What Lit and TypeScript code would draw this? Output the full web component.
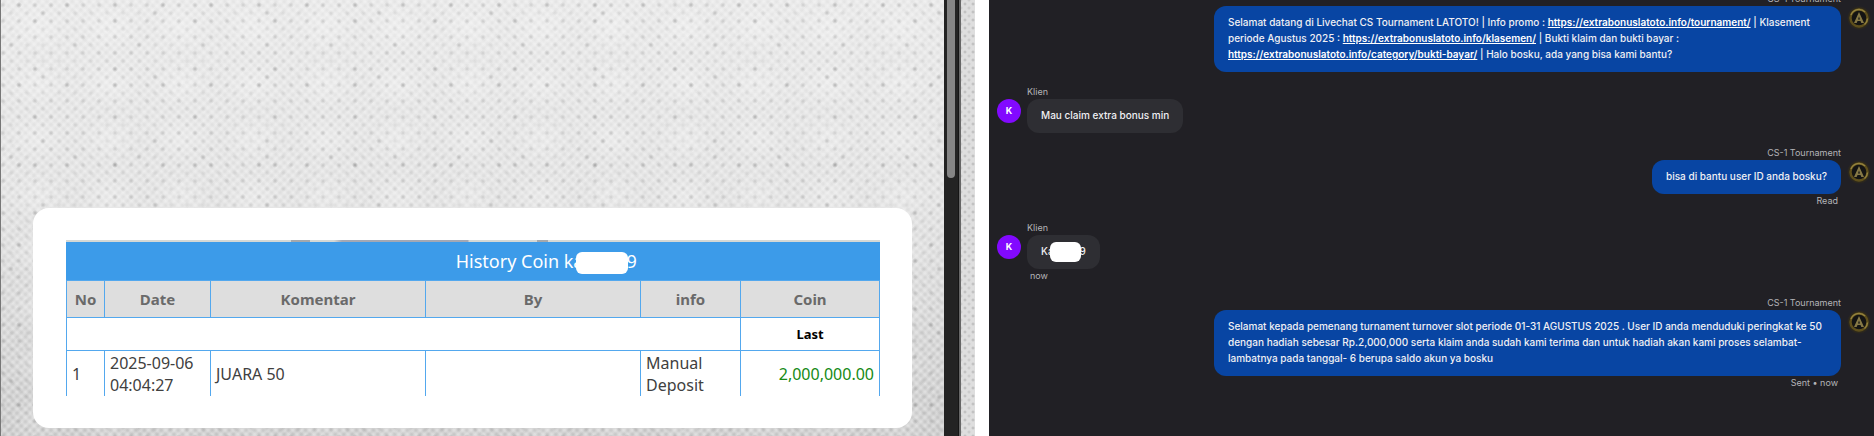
import { LitElement, html, css, nothing, TemplateResult } from "lit";
import { customElement, property } from "lit/decorators.js";

@customElement("cs-avatar")
class CsAvatar extends LitElement {
  static styles = css`
    :host { display: block; width: 24px; height: 24px; }
    svg { display: block; width: 24px; height: 24px; }
  `;
  render() {
    return html`<svg viewBox="0 0 24 24" role="img" aria-label="CS-1 Tournament">
      <defs>
        <radialGradient id="glow">
          <stop offset="0.7" stop-color="#3a3113" />
          <stop offset="1" stop-color="#3a3113" stop-opacity="0" />
        </radialGradient>
      </defs>
      <circle cx="12" cy="12" r="12" fill="url(#glow)" />
      <circle cx="12" cy="12" r="8.5" fill="#141413" stroke="#5e4f1c" stroke-width="2.400" />
      <path d="M4 9A8.500 8.500 0 0 1 18 6M20.500 12.500A8.500 8.500 0 0 1 17.500 18.500" fill="none" stroke="#94833f" stroke-width="1.400" />
      <path d="M12 6 17 17H14.300L13.500 15H10.500L9.700 17H7Z" fill="#857846" />
      <path d="M12 10.500 13 13.500H11Z" fill="#141413" />
    </svg>`;
  }
}

@customElement("history-panel")
class HistoryPanel extends LitElement {
  static styles = css`
    :host {
      display: flex;
      min-width: 0;
      font-family: "Noto Sans", "Open Sans", sans-serif;
    }
    .page {
      flex: 1;
      min-width: 0;
      display: flex;
      flex-direction: column;
      justify-content: flex-end;
      padding: 0 32px 8px;
      border-left: 1px solid #777;
      background:
        radial-gradient(circle, rgba(70, 70, 70, 0.2) 0, transparent 3px) 10px -3px / 16px 16px,
        radial-gradient(circle, rgba(70, 70, 70, 0.12) 0, transparent 3px) 2px 5px / 16px 16px,
        radial-gradient(circle at 18px 5px, rgba(70, 70, 70, 0.16) 0, transparent 3px) 0 0 / 48px 80px,
        radial-gradient(circle at 34px 21px, rgba(70, 70, 70, 0.14) 0, transparent 3px) 0 0 / 80px 48px,
        radial-gradient(circle at 10px 45px, rgba(70, 70, 70, 0.16) 0, transparent 3px) 0 0 / 64px 112px,
        radial-gradient(circle at 42px 13px, rgba(70, 70, 70, 0.16) 0, transparent 3px) 0 0 / 112px 64px,
        radial-gradient(ellipse at 50% 50%, rgba(255, 255, 255, 0.2), transparent 60%) 0 0 / 72px 56px,
        repeating-linear-gradient(45deg, rgba(255, 255, 255, 0.24) 0 1px, transparent 3px 4px, rgba(255, 255, 255, 0.24) 6px),
        repeating-linear-gradient(135deg, rgba(255, 255, 255, 0.24) 0 1px, transparent 3px 4px, rgba(255, 255, 255, 0.24) 6px),
        linear-gradient(#e5e5e5, #dedede 45%, #c4c4c4);
    }
    .track {
      flex: none;
      width: 15px;
      padding: 0 3px;
      box-sizing: border-box;
      background: #232323;
      border-right: 1px solid #151515;
    }
    .thumb {
      height: 178px;
      border-radius: 0 0 5px 5px;
      background: #858585;
    }
    .edge {
      flex: none;
      width: 14px;
      border-left: 2px solid #666;
      background:
        radial-gradient(circle, rgba(80, 80, 80, 0.3) 0, transparent 2px) 0 0 / 8px 8px,
        radial-gradient(circle, rgba(80, 80, 80, 0.2) 0, transparent 2px) 4px 4px / 8px 8px,
        #dedede;
    }
    .card {
      background: #fff;
      border-radius: 16px;
      padding: 32px 32px 32px 33px;
    }
    .strip {
      height: 2px;
      background: linear-gradient(90deg, #d5d8d5 0 225px, #a4a8ac 225px 244px, #d5d8d5 244px 268px, #a4a8b4 276px 402px, #d5d8d5 403px 471px, #a4a8ac 471px 482px, #d5d8d5 482px);
    }
    table {
      width: 100%;
      table-layout: fixed;
      border-collapse: collapse;
      font-size: 16px;
      line-height: 22px;
      color: #404040;
    }
    caption {
      height: 38px;
      padding-left: 18%;
      line-height: 38px;
      font-size: 18px;
      color: #fff;
      background: #3c9be9;
    }
    th, td { border: 1px solid #53a8ee; padding: 0 5px; }
    td { text-align: left; border-bottom: 0; padding-top: 1px; }
    .heads th { height: 36px; background: #dedede; color: #6a6a6a; font-size: 15px; }
    .totals td, .totals th { height: 32px; padding-top: 0; }
    .totals th { font-size: 13px; color: #000; }
    td.coin { text-align: right; color: #158a15; }
    .mask {
      display: inline-block;
      width: 52px;
      height: 22px;
      margin: 0 -2px 0 -7px;
      vertical-align: middle;
      border-radius: 6px;
      background: #fff;
      position: relative;
    }
    .n { width: 38px; }
    .d { width: 106px; }
    .k { width: 215px; }
    .i { width: 100px; }
    .c { width: 139px; }
  `;
  render() {
    return html`
      <div class="page">
        <section class="card">
          <div class="strip"></div>
          <table>
            <caption>History Coin ka<span class="mask"></span>9</caption>
            <colgroup>
              <col class="n"><col class="d"><col class="k"><col class="k"><col class="i"><col class="c">
            </colgroup>
            <thead>
              <tr class="heads">
                ${["No", "Date", "Komentar", "By", "info", "Coin"].map((h) => html`<th scope="col">${h}</th>`)}
              </tr>
            </thead>
            <tbody>
              <tr class="totals"><td colspan="5"></td><th>Last</th></tr>
              <tr>
                <td>1</td><td>2025-09-06 04:04:27</td><td>JUARA 50</td><td></td>
                <td>Manual Deposit</td><td class="coin">2,000,000.00</td>
              </tr>
            </tbody>
          </table>
        </section>
      </div>
      <div class="track"><div class="thumb"></div></div>
      <div class="edge"></div>
    `;
  }
}

@customElement("chat-message")
class ChatMessage extends LitElement {
  @property() author = "";
  @property() status = "";
  @property({ type: Boolean, reflect: true }) own = false;
  @property({ attribute: false }) body: TemplateResult | string = "";

  static styles = css`
    :host { display: flex; gap: 6px; align-items: flex-start; }
    :host([own]) { flex-direction: row-reverse; }
    .stack { display: flex; flex-direction: column; align-items: flex-start; max-width: 627px; }
    :host([own]) .stack { align-items: flex-end; }
    .name, .status { font-size: 9px; line-height: 14px; color: #b4b4b8; }
    .status { padding: 0 3px; }
    .bubble {
      padding: 8px 14px 10px;
      border-radius: 12px;
      background: #2e2e33;
      color: #f0f0f4;
      font-size: 10px;
      font-weight: 500;
      line-height: 16px;
    }
    :host([own]) .bubble { background: #0845a3; }
    a { color: #fff; font-weight: 600; text-decoration: underline; }
    .avatar { flex: none; margin-top: 14px; }
    .initial {
      width: 24px;
      height: 24px;
      border-radius: 50%;
      background: #8209ff;
      color: #fff;
      font-size: 9px;
      font-weight: 700;
      line-height: 24px;
      text-align: center;
    }
    .mask {
      display: inline-block;
      width: 31px;
      height: 20px;
      margin: -4px -1px -4px -4px;
      vertical-align: middle;
      border-radius: 6px;
      background: #fff;
      position: relative;
    }
  `;
  render() {
    return html`
      <div class="avatar">${this.own ? html`<cs-avatar></cs-avatar>` : html`<div class="initial">K</div>`}</div>
      <div class="stack">
        <div class="name">${this.author}</div>
        <div class="bubble">${this.body}</div>
        ${this.status ? html`<div class="status">${this.status}</div>` : nothing}
      </div>
    `;
  }
}

const link = (url: string) => html`<a href=${url}>${url}</a>`;

@customElement("app-root")
class AppRoot extends LitElement {
  static styles = css`
    :host {
      display: grid;
      grid-template-columns: minmax(0, 975fr) 14px minmax(0, 885fr);
      height: 100vh;
      overflow: hidden;
      background: #fff;
    }
    .chat {
      grid-column: 3;
      display: flex;
      flex-direction: column;
      justify-content: flex-end;
      gap: 13px;
      min-width: 0;
      min-height: 0;
      padding: 0 3px 46px 8px;
      background: #212025;
      font-family: Inter, sans-serif;
    }
  `;
  render() {
    return html`
      <history-panel></history-panel>
      <main class="chat">
        <chat-message own author="CS-1 Tournament" .body=${html`Selamat datang di Livechat CS Tournament LATOTO! | Info promo : ${link("https://extrabonuslatoto.info/tournament/")} | Klasement periode Agustus 2025 : ${link("https://extrabonuslatoto.info/klasemen/")} | Bukti klaim dan bukti bayar : ${link("https://extrabonuslatoto.info/category/bukti-bayar/")} | Halo bosku, ada yang bisa kami bantu?`}></chat-message>
        <chat-message author="Klien" .body=${"Mau claim extra bonus min"}></chat-message>
        <chat-message own author="CS-1 Tournament" status="Read" .body=${"bisa di bantu user ID anda bosku?"}></chat-message>
        <chat-message author="Klien" status="now" .body=${html`Ka<span class="mask"></span>9`}></chat-message>
        <chat-message own author="CS-1 Tournament" status="Sent • now" .body=${"Selamat kepada pemenang turnament turnover slot periode 01-31 AGUSTUS 2025 . User ID anda menduduki peringkat ke 50 dengan hadiah sebesar Rp.2,000,000 serta klaim anda sudah kami terima dan untuk hadiah akan kami proses selambat-lambatnya pada tanggal- 6 berupa saldo akun ya bosku"}></chat-message>
      </main>
    `;
  }
}
